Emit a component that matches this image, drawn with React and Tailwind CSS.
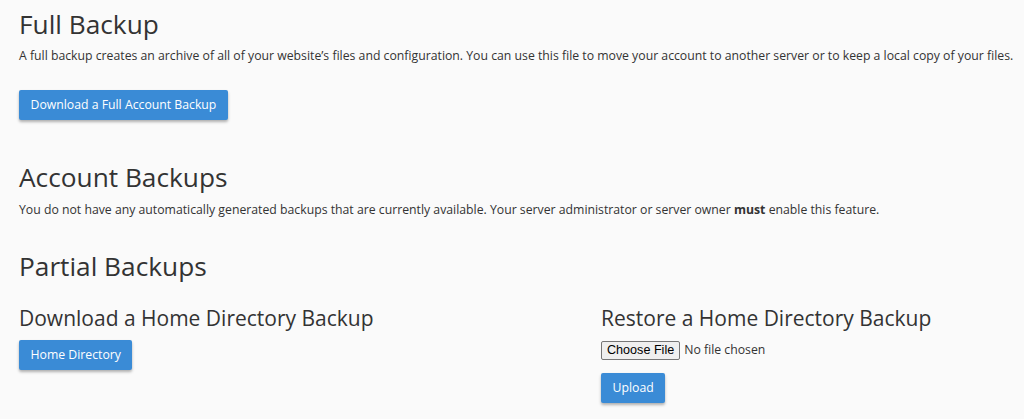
import React from "react";

const Btn = ({ children }) => (
  <button className="rounded-[2px] bg-[#3a8bd6] px-[11.5px] py-[6px] text-[12.25px] leading-[18px] text-white shadow-[0_2px_3px_rgba(0,0,0,0.3)]">
    {children}
  </button>
);

const App = () => {
  return (
    <div className="h-[419px] w-full overflow-hidden bg-[#fafafa] pl-[19px] pr-[4px] text-[#333] font-['Open_Sans',sans-serif]">
      <h1 className="pt-[9px] text-[26.25px] leading-[30px]">Full Backup</h1>
      <p className="mt-[8px] text-[12.25px] leading-[17.5px]">
        A full backup creates an archive of all of your website’s files and
        configuration. You can use this file to move your account to another
        server or to keep a local copy of your files.
      </p>
      <div className="mt-[25px] flex">
        <Btn>Download a Full Account Backup</Btn>
      </div>

      <h1 className="mt-[42px] text-[26.25px] leading-[30px]">Account Backups</h1>
      <p className="mt-[9px] text-[12.25px] leading-[17.5px]">
        You do not have any automatically generated backups that are currently
        available. Your server administrator or server owner{" "}
        <strong className="font-bold">must</strong> enable this feature.
      </p>

      <h1 className="mt-[33px] text-[26.25px] leading-[30px]">Partial Backups</h1>

      <div className="mt-[25px] grid grid-cols-[582px_1fr]">
        <div>
          <h2 className="text-[21px] leading-[24px]">
            Download a Home Directory Backup
          </h2>
          <div className="mt-[10px] flex">
            <Btn>Home Directory</Btn>
          </div>
        </div>
        <div>
          <h2 className="text-[21px] leading-[24px]">
            Restore a Home Directory Backup
          </h2>
          <div className="mt-[11px] flex items-center text-[12.25px]">
            <span className="rounded-[2px] border border-[#767676] bg-[#efefef] px-[5px] py-[1px] font-['Liberation_Sans',sans-serif] text-[12.6px] leading-[15px] text-black">
              Choose File
            </span>
            <span className="ml-[4px]">No file chosen</span>
          </div>
          <div className="mt-[13px] flex">
            <Btn>Upload</Btn>
          </div>
        </div>
      </div>
    </div>
  );
};

export default App;
